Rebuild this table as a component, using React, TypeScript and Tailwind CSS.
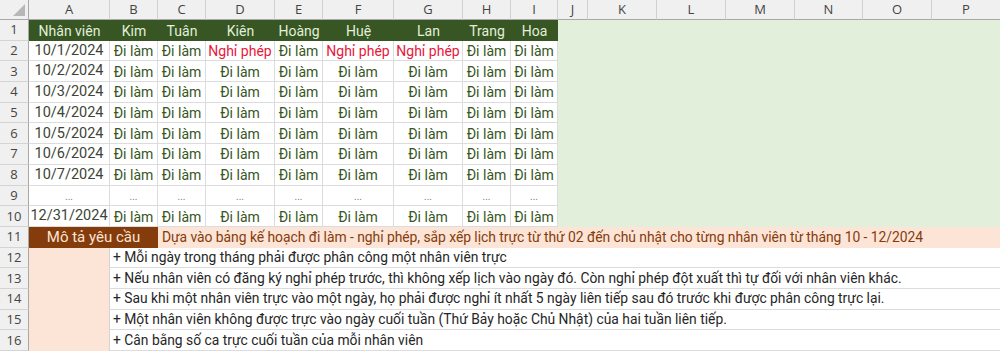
import React from "react";

const cols = ["A", "B", "C", "D", "E", "F", "G", "H", "I", "J", "K", "L", "M", "N", "O", "P"];
const names = ["Nhân viên", "Kim", "Tuân", "Kiên", "Hoàng", "Huệ", "Lan", "Trang", "Hoa"];

type Row = { n: number; cells: string[] };
const W = "Đi làm";
const N = "Nghỉ phép";
const rows: Row[] = [
  { n: 2, cells: ["10/1/2024", W, W, N, W, N, N, W, W] },
  { n: 3, cells: ["10/2/2024", W, W, W, W, W, W, W, W] },
  { n: 4, cells: ["10/3/2024", W, W, W, W, W, W, W, W] },
  { n: 5, cells: ["10/4/2024", W, W, W, W, W, W, W, W] },
  { n: 6, cells: ["10/5/2024", W, W, W, W, W, W, W, W] },
  { n: 7, cells: ["10/6/2024", W, W, W, W, W, W, W, W] },
  { n: 8, cells: ["10/7/2024", W, W, W, W, W, W, W, W] },
  { n: 9, cells: ["...", "...", "...", "...", "...", "...", "...", "...", "..."] },
  { n: 10, cells: ["12/31/2024", W, W, W, W, W, W, W, W] },
];

const notes = [
  "+ Mỗi ngày trong tháng phải được phân công một nhân viên trực",
  "+ Nếu nhân viên có đăng ký nghỉ phép trước, thì không xếp lịch vào ngày đó. Còn nghỉ phép đột xuất thì tự đối với nhân viên khác.",
  "+ Sau khi một nhân viên trực vào một ngày, họ phải được nghỉ ít nhất 5 ngày liên tiếp sau đó trước khi được phân công trực lại.",
  "+ Một nhân viên không được trực vào ngày cuối tuần (Thứ Bảy hoặc Chủ Nhật) của hai tuần liên tiếp.",
  "+ Cân bằng số ca trực cuối tuần của mỗi nhân viên",
];

function RowHead({ n }: { n: number }) {
  return (
    <div className="flex items-center justify-center bg-[#f0f0f0] border-r border-r-[#a8a8a8] border-b border-b-[#d4d4d4] text-[13px] text-[#444444] font-['Open_Sans']">
      {n}
    </div>
  );
}

export default function App() {
  return (
    <div className="w-[1000px] h-[351px] overflow-hidden bg-white">
      <div className="grid h-[351px] w-[1001px] grid-cols-[29px_81px_48px_48px_69px_48px_71px_69px_48px_47px_30px_69px_69px_69px_68px_69px_69px] grid-rows-[20px_repeat(16,minmax(0,1fr))] font-['Roboto'] text-[14px] leading-none">
        {/* corner */}
        <div className="relative bg-[#f0f0f0] border-r border-r-[#a8a8a8] border-b border-b-[#a8a8a8]">
          <svg className="absolute right-[3px] bottom-[3px]" width="12" height="12" viewBox="0 0 12 12">
            <polygon points="12,0 12,12 0,12" fill="#b7b7b7" />
          </svg>
        </div>
        {cols.map((c) => (
          <div
            key={c}
            className="flex items-center justify-center bg-[#f0f0f0] border-r border-r-[#d0d0d0] border-b border-b-[#a8a8a8] text-[13px] text-[#444444] font-['Open_Sans']"
          >
            {c}
          </div>
        ))}

        {/* row 1 header */}
        <RowHead n={1} />
        {names.map((nm) => (
          <div key={nm} className="flex items-center justify-center bg-[#375623] text-[#e2efda] text-[14px] pt-[1px]">
            {nm}
          </div>
        ))}
        <div className="col-start-11 col-span-7 row-start-2 row-span-10 bg-[#e2efda]" />

        {rows.map((r) => (
          <React.Fragment key={r.n}>
            <RowHead n={r.n} />
            {r.cells.map((v, i) => (
              <div
                key={i}
                className={
                  "flex justify-center whitespace-nowrap border-r border-b border-[#dcdcdc] " +
                  (v === "..."
                    ? "items-end pb-[3px] text-[#7a7a7a] text-[10px]"
                    : "items-center pt-[1px] ") +
                  (v === N
                    ? "text-[#e8173a]"
                    : v === "..."
                    ? ""
                    : i === 0
                    ? "text-[#3d4436] text-[14.5px]"
                    : "text-[#375623]")
                }
              >
                {v}
              </div>
            ))}
          </React.Fragment>
        ))}

        {/* row 11 */}
        <RowHead n={11} />
        <div className="col-span-2 flex items-center justify-center bg-[#843c0c] text-[#fce4d6] text-[15px] pt-[1px]">
          Mô tả yêu cầu
        </div>
        <div className="col-span-14 flex items-center bg-[#fce4d6] text-[#843c0c] pl-[4px] pt-[1px] whitespace-nowrap overflow-hidden text-[13.9px] tracking-[-0.05px]">
          Dựa vào bảng kế hoạch đi làm - nghỉ phép, sắp xếp lịch trực từ thứ 02 đến chủ nhật cho từng nhân viên từ tháng 10 - 12/2024
        </div>

        {/* rows 12-16 */}
        {notes.map((t, i) => (
          <React.Fragment key={i}>
            <RowHead n={12 + i} />
            {i === 0 && <div className="col-start-2 row-start-13 row-span-5 bg-[#fce4d6] border-r border-r-[#d4d4d4]" />}
            <div className="col-start-3 col-span-15 flex items-center pl-[3px] pt-[1px] whitespace-nowrap overflow-hidden border-b border-b-[#dcdcdc] text-[#262626] text-[13.85px]">
              {t}
            </div>
          </React.Fragment>
        ))}
      </div>
    </div>
  );
}
